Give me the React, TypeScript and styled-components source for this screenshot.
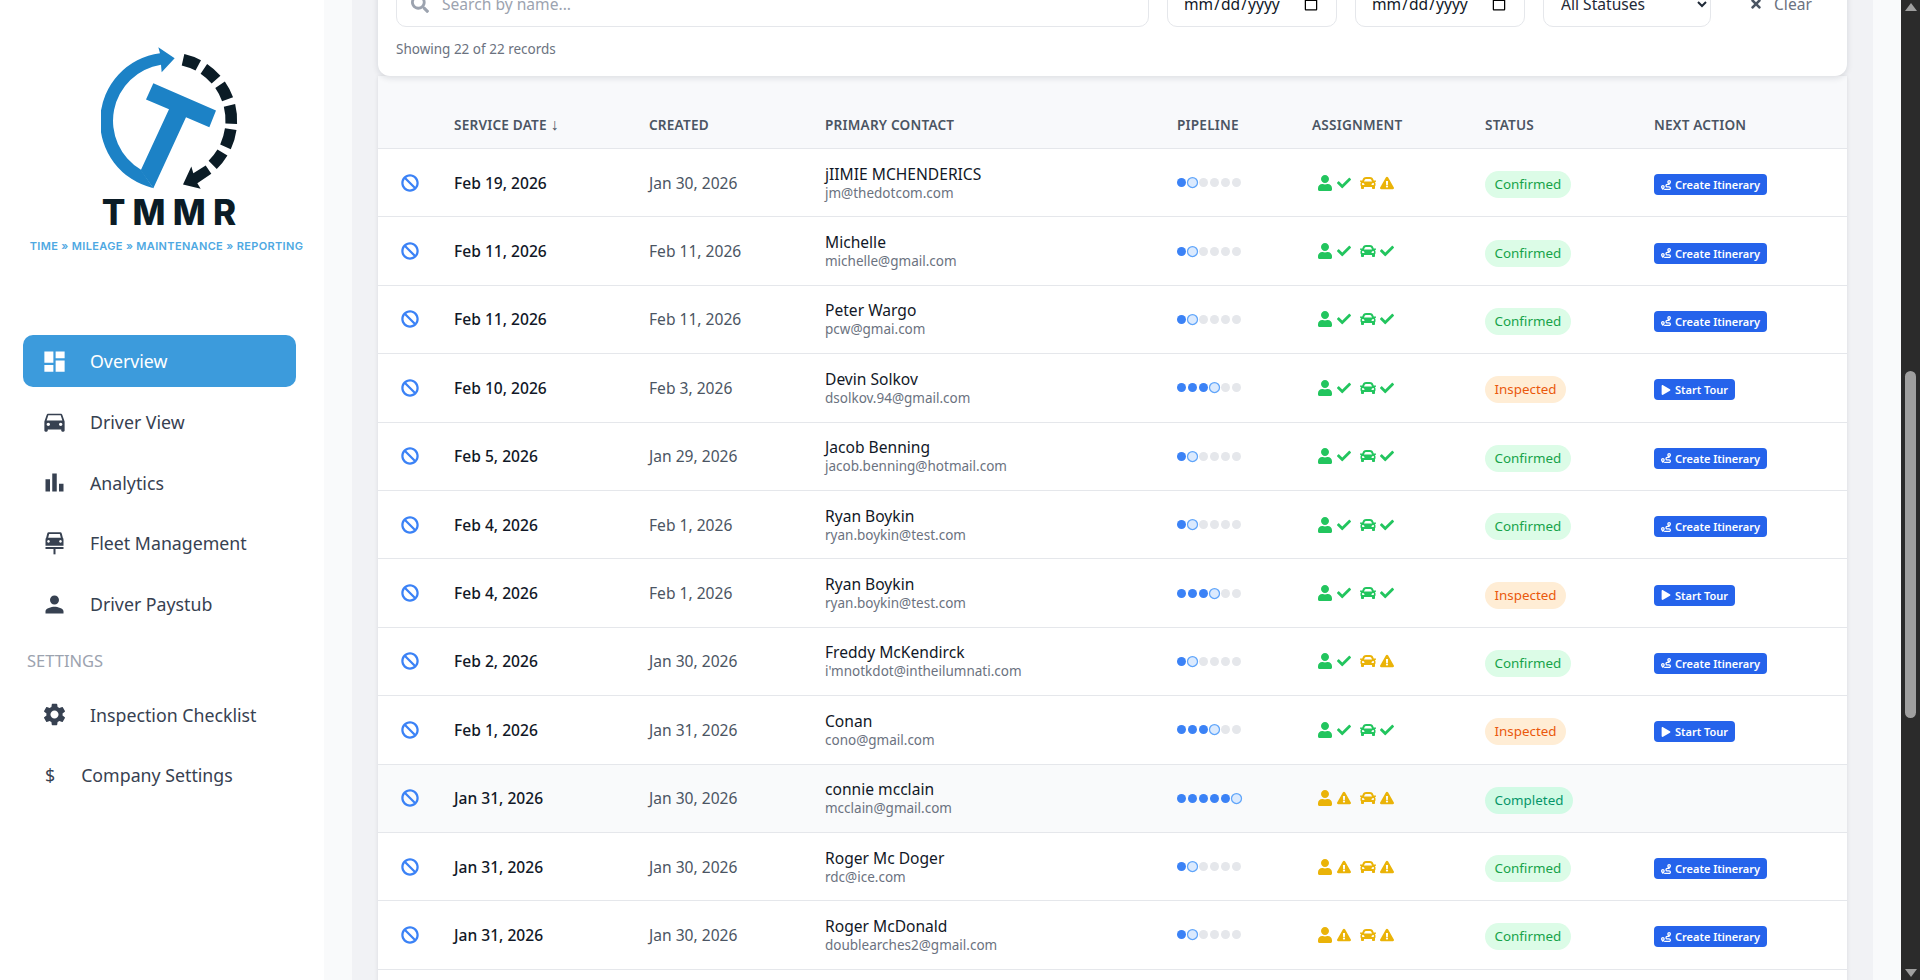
import React, { useLayoutEffect, useRef } from 'react';
import styled, { createGlobalStyle } from 'styled-components';
import { FaBan, FaCar, FaCheck, FaExclamationTriangle, FaPlay, FaRoute, FaSearch, FaTimes, FaUser } from 'react-icons/fa';
import { MdBarChart, MdDashboard, MdDirectionsCar, MdPerson, MdSettings } from 'react-icons/md';

type Status = 'Confirmed' | 'Inspected' | 'Completed';

interface Booking {
    serviceDate: string;
    created: string;
    name: string;
    email: string;
    status: Status;
    driverOk: boolean;
    carOk: boolean;
}

const bookings: Booking[] = [
    { serviceDate: 'Feb 19, 2026', created: 'Jan 30, 2026', name: 'jIIMIE MCHENDERICS', email: 'jm@thedotcom.com', status: 'Confirmed', driverOk: true, carOk: false },
    { serviceDate: 'Feb 11, 2026', created: 'Feb 11, 2026', name: 'Michelle', email: 'michelle@gmail.com', status: 'Confirmed', driverOk: true, carOk: true },
    { serviceDate: 'Feb 11, 2026', created: 'Feb 11, 2026', name: 'Peter Wargo', email: 'pcw@gmai.com', status: 'Confirmed', driverOk: true, carOk: true },
    { serviceDate: 'Feb 10, 2026', created: 'Feb 3, 2026', name: 'Devin Solkov', email: 'dsolkov.94@gmail.com', status: 'Inspected', driverOk: true, carOk: true },
    { serviceDate: 'Feb 5, 2026', created: 'Jan 29, 2026', name: 'Jacob Benning', email: 'jacob.benning@hotmail.com', status: 'Confirmed', driverOk: true, carOk: true },
    { serviceDate: 'Feb 4, 2026', created: 'Feb 1, 2026', name: 'Ryan Boykin', email: 'ryan.boykin@test.com', status: 'Confirmed', driverOk: true, carOk: true },
    { serviceDate: 'Feb 4, 2026', created: 'Feb 1, 2026', name: 'Ryan Boykin', email: 'ryan.boykin@test.com', status: 'Inspected', driverOk: true, carOk: true },
    { serviceDate: 'Feb 2, 2026', created: 'Jan 30, 2026', name: 'Freddy McKendirck', email: "i'mnotkdot@intheilumnati.com", status: 'Confirmed', driverOk: true, carOk: false },
    { serviceDate: 'Feb 1, 2026', created: 'Jan 31, 2026', name: 'Conan', email: 'cono@gmail.com', status: 'Inspected', driverOk: true, carOk: true },
    { serviceDate: 'Jan 31, 2026', created: 'Jan 30, 2026', name: 'connie mcclain', email: 'mcclain@gmail.com', status: 'Completed', driverOk: false, carOk: false },
    { serviceDate: 'Jan 31, 2026', created: 'Jan 30, 2026', name: 'Roger Mc Doger', email: 'rdc@ice.com', status: 'Confirmed', driverOk: false, carOk: false },
    { serviceDate: 'Jan 31, 2026', created: 'Jan 30, 2026', name: 'Roger McDonald', email: 'doublearches2@gmail.com', status: 'Confirmed', driverOk: false, carOk: false },
];

const pipelineStep: Record<Status, number> = { Confirmed: 1, Inspected: 3, Completed: 5 };

const statusColors: Record<Status, { bg: string; fg: string }> = {
    Confirmed: { bg: '#dcfce7', fg: '#16a34a' },
    Inspected: { bg: '#ffedd5', fg: '#ea580c' },
    Completed: { bg: '#d1fae5', fg: '#059669' },
};

const GlobalStyle = createGlobalStyle`
  html, body {
    margin: 0;
    height: 100%;
    overflow: hidden;
    font-family: "Noto Sans", "Open Sans", sans-serif;
    background: #f9fafb;
  }
  * { box-sizing: border-box; }
`;

const Shell = styled.div`
  display: flex;
  height: 100vh;
  overflow: hidden;
`;

const Sidebar = styled.aside`
  flex: 0 0 324px;
  background: #ffffff;
`;

const LogoArea = styled.div`
  height: 335px;
  width: 273px;
  margin-left: 30px;
  padding-top: 47px;
  display: flex;
  flex-direction: column;
  align-items: center;
`;

const LogoMark = styled.svg`
  width: 137px;
  height: 142px;
  margin-left: 5px;
  flex: none;
`;

const LogoWord = styled.div`
  font-family: "Inter", "Liberation Sans", sans-serif;
  font-weight: 800;
  font-size: 35px;
  line-height: 36px;
  letter-spacing: 7.2px;
  color: #0b1c26;
  margin: 5px 0 0 12px;
`;

const LogoTagline = styled.div`
  font-family: "Inter", "Liberation Sans", sans-serif;
  font-weight: 600;
  font-size: 11px;
  line-height: 14px;
  letter-spacing: 0.35px;
  color: #4ea8e2;
  white-space: nowrap;
  margin-top: 9px;
`;

const NavItem = styled.a<{ $active?: boolean }>`
  display: flex;
  align-items: center;
  gap: 22px;
  width: 273px;
  height: 52px;
  margin: 0 0 8.8px 23px;
  padding-left: 18px;
  border-radius: 10px;
  font-size: 17.76px;
  color: ${(p) => (p.$active ? '#ffffff' : '#374151')};
  background: ${(p) => (p.$active ? '#3c9bdc' : 'transparent')};
  svg {
    flex: none;
    font-size: 27px;
  }
`;

const DollarIcon = styled.span`
  margin: 0 4px;
`;

const NavLabel = styled.div`
  height: 43px;
  margin-bottom: 6.7px;
  padding-left: 27px;
  display: flex;
  align-items: center;
  font-size: 16.5px;
  color: #9ca3af;
`;

const Main = styled.main`
  flex: 1;
  min-width: 0;
  padding: 0 28px;
  background: #f9fafb;
`;

const ScrollArea = styled.div`
  height: 100%;
  overflow: hidden;
  background: #f1f2f5;
  padding: 40px 26px 60px;
`;

const FilterCard = styled.section`
  position: relative;
  z-index: 1;
  background: #ffffff;
  border-radius: 12px;
  padding: 18px;
  box-shadow: 0 2px 6px rgba(17, 24, 39, 0.12);
`;

const FilterRow = styled.div`
  display: flex;
  gap: 18px;
  height: 46px;
`;

const SearchBox = styled.label`
  width: 753px;
  display: flex;
  align-items: center;
  gap: 11px;
  padding-left: 14px;
  border: 1px solid #e5e7eb;
  border-radius: 10px;
  color: #9ca3af;
  svg {
    flex: none;
    font-size: 18px;
  }
`;

const SearchInput = styled.input`
  flex: 1;
  border: 0;
  outline: 0;
  background: transparent;
  font: inherit;
  font-size: 15.6px;
  &::placeholder {
    color: #9ca3af;
    opacity: 1;
  }
`;

const DateField = styled.input`
  width: 170px;
  padding: 0 15px;
  border: 1px solid #e5e7eb;
  border-radius: 10px;
  background: #ffffff;
  font: inherit;
  font-size: 15.6px;
  color: #111827;
`;

const StatusSelect = styled.select`
  width: 168px;
  padding: 0 13px;
  border: 1px solid #e5e7eb;
  border-radius: 10px;
  background: #ffffff;
  font: inherit;
  font-size: 15.6px;
  color: #1f2937;
`;

const ClearButton = styled.button`
  display: flex;
  align-items: center;
  gap: 11px;
  padding: 0 10px;
  margin-left: 10px;
  border: 0;
  background: transparent;
  font: inherit;
  font-size: 15.6px;
  color: #6b7280;
  svg {
    font-size: 14px;
    color: #4b5563;
  }
`;

const ResultCount = styled.div`
  margin-top: 13px;
  font-size: 13.5px;
  line-height: 18px;
  color: #6b7280;
`;

const TableCard = styled.section`
  background: #ffffff;
  box-shadow: 0 1px 4px rgba(17, 24, 39, 0.1);
  padding-bottom: 40px;
`;

const columns = '60px 195px 176px 352px 135px 173px 169px 209px';

const TableHead = styled.div`
  display: grid;
  grid-template-columns: ${columns};
  align-items: end;
  height: 73px;
  padding-bottom: 14px;
  background: #f8f9fb;
  border-bottom: 1px solid #e5e7eb;
`;

const HeadCell = styled.div`
  padding-left: 16px;
  font-size: 13.6px;
  line-height: 18px;
  font-weight: 600;
  letter-spacing: 0.2px;
  text-transform: uppercase;
  color: #4b5563;
`;

const SortArrow = styled.span`
  font-size: 16px;
  font-weight: 400;
`;

const Row = styled.div<{ $muted?: boolean }>`
  display: grid;
  grid-template-columns: ${columns};
  align-items: center;
  height: 68.4px;
  border-bottom: 1px solid #e5e7eb;
  background: ${(p) => (p.$muted ? '#f9fafb' : '#ffffff')};
`;

const Cell = styled.div`
  padding-left: 16px;
  min-width: 0;
`;

const CancelCell = styled.div`
  display: flex;
  justify-content: center;
  padding-left: 4px;
  color: #3b82f6;
  font-size: 18px;
`;

const ServiceDate = styled(Cell)`
  font-size: 15.6px;
  font-weight: 500;
  color: #111827;
`;

const CreatedDate = styled(Cell)`
  font-size: 15.6px;
  color: #4b5563;
`;

const ContactName = styled.div`
  font-size: 15.6px;
  line-height: 20px;
  color: #111827;
`;

const ContactEmail = styled.div`
  font-size: 13.5px;
  line-height: 18px;
  color: #6b7280;
`;

const Dots = styled(Cell)`
  display: flex;
  gap: 2px;
`;

const Dot = styled.span<{ $state: 'done' | 'current' | 'todo' }>`
  width: 9px;
  height: 9px;
  border-radius: 50%;
  background: ${(p) => (p.$state === 'done' ? '#3b82f6' : p.$state === 'current' ? '#dbeafe' : '#e5e7eb')};
  ${(p) => p.$state === 'current' && 'border: 1px solid #60a5fa; transform: scale(1.25);'}
`;

const Assignment = styled(Cell)`
  display: flex;
  align-items: center;
  padding-left: 21px;
`;

const AssignIcon = styled.span<{ $ok: boolean; $gap: number; $size: number }>`
  display: inline-flex;
  margin-right: ${(p) => p.$gap}px;
  color: ${(p) => (p.$ok ? '#22c55e' : '#eab308')};
  font-size: ${(p) => p.$size}px;
`;

const Badge = styled.span<{ $status: Status }>`
  display: inline-block;
  margin-top: 4px;
  padding: 0 9.5px;
  height: 27px;
  line-height: 27px;
  border-radius: 14px;
  font-size: 13.4px;
  background: ${(p) => statusColors[p.$status].bg};
  color: ${(p) => statusColors[p.$status].fg};
`;

const ActionButton = styled.button`
  display: inline-flex;
  align-items: center;
  gap: 4px;
  height: 21px;
  margin-top: 4px;
  padding: 0 7px;
  border: 0;
  border-radius: 4px;
  background: #2563eb;
  font: inherit;
  font-size: 11px;
  font-weight: 600;
  color: #ffffff;
  svg {
    font-size: 10px;
  }
`;

const ScrollTrack = styled.div`
  flex: 0 0 19px;
  display: flex;
  flex-direction: column;
  align-items: center;
  background: #2b2b2b;
  padding: 3px 0;
`;

const ArrowUp = styled.span`
  width: 0;
  height: 0;
  border-left: 6px solid transparent;
  border-right: 6px solid transparent;
  border-bottom: 8px solid #9f9f9f;
`;

const ArrowDown = styled(ArrowUp)`
  border-bottom: 0;
  border-top: 8px solid #9f9f9f;
  margin-top: auto;
`;

const ScrollThumb = styled.div`
  width: 11px;
  height: 347px;
  margin-top: 360px;
  border-radius: 6px;
  background: #9f9f9f;
`;

const dashAngles = [
    [-77, -62],
    [-56, -41],
    [-35, -20],
    [-14, 3],
    [8, 25],
    [31, 45.5],
];

const dashPath = ([from, to]: number[]) => {
    const point = (deg: number) => {
        const rad = (deg * Math.PI) / 180;
        return `${445 + 187 * Math.cos(rad)} ${270 + 187 * Math.sin(rad)}`;
    };
    return `M${point(from)} A187 187 0 0 1 ${point(to)}`;
};

const Logo = () => (
    <LogoArea>
        <LogoMark viewBox="241 50 411 425">
            <path
                fill="#1c82c6"
                d="M398 473 A206 206 0 0 1 418 68 L413 50 L462 83 L423 125 L421 103 A170 170 0 0 0 360 417 Z"
            />
            <polygon fill="#1c82c6" points="398,158 586,240 566,290 496,260 398,473 360,420 445,236 376,207" />
            {dashAngles.map((a) => (
                <path key={a[0]} d={dashPath(a)} fill="none" stroke="#0b1c26" strokeWidth={35} />
            ))}
            <polygon fill="#0b1c26" points="555,405 572,430 530,458 540,475 487,462 512,408 518,428" />
        </LogoMark>
        <LogoWord>TMMR</LogoWord>
        <LogoTagline>TIME » MILEAGE » MAINTENANCE » REPORTING</LogoTagline>
    </LogoArea>
);

// car on a signpost, the stock icon sets have no close match
const FleetIcon = () => (
    <svg viewBox="-13.5 -7 81 81" width="1em" height="1em" fill="currentColor">
        <path
            fillRule="evenodd"
            d="M10 0H44Q48 0 49 4L52 16Q54 18 54 22V40H0V22Q0 18 2 16L5 4Q6 0 10 0ZM11 5L8 16H46L43 5ZM9 23a4 4 0 1 0 .01 0ZM45 23a4 4 0 1 0 .01 0Z"
        />
        <rect x="0" y="44" width="54" height="6" />
        <rect x="24" y="50" width="6" height="16" />
    </svg>
);

const BookingRow: React.FC<{ booking: Booking }> = ({ booking }) => {
    const step = pipelineStep[booking.status];
    return (
        <Row $muted={booking.status === 'Completed'}>
            <CancelCell>
                <FaBan />
            </CancelCell>
            <ServiceDate>{booking.serviceDate}</ServiceDate>
            <CreatedDate>{booking.created}</CreatedDate>
            <Cell>
                <ContactName>{booking.name}</ContactName>
                <ContactEmail>{booking.email}</ContactEmail>
            </Cell>
            <Dots>
                {[0, 1, 2, 3, 4, 5].map((i) => (
                    <Dot key={i} $state={i < step ? 'done' : i === step ? 'current' : 'todo'} />
                ))}
            </Dots>
            <Assignment>
                <AssignIcon $ok={booking.driverOk} $gap={4} $size={16}>
                    <FaUser />
                </AssignIcon>
                <AssignIcon $ok={booking.driverOk} $gap={9} $size={14}>
                    {booking.driverOk ? <FaCheck /> : <FaExclamationTriangle />}
                </AssignIcon>
                <AssignIcon $ok={booking.carOk} $gap={4} $size={16}>
                    <FaCar />
                </AssignIcon>
                <AssignIcon $ok={booking.carOk} $gap={0} $size={14}>
                    {booking.carOk ? <FaCheck /> : <FaExclamationTriangle />}
                </AssignIcon>
            </Assignment>
            <Cell>
                <Badge $status={booking.status}>{booking.status}</Badge>
            </Cell>
            <Cell>
                {booking.status === 'Confirmed' && (
                    <ActionButton>
                        <FaRoute /> Create Itinerary
                    </ActionButton>
                )}
                {booking.status === 'Inspected' && (
                    <ActionButton>
                        <FaPlay /> Start Tour
                    </ActionButton>
                )}
            </Cell>
        </Row>
    );
};

const App: React.FC = () => {
    const scrollRef = useRef<HTMLDivElement>(null);

    // the page is photographed part way down the list
    useLayoutEffect(() => {
        if (scrollRef.current) scrollRef.current.scrollTop = 77;
    }, []);

    return (
        <Shell>
            <GlobalStyle />
            <Sidebar>
                <Logo />
                <nav>
                    <NavItem $active>
                        <MdDashboard /> Overview
                    </NavItem>
                    <NavItem>
                        <MdDirectionsCar /> Driver View
                    </NavItem>
                    <NavItem>
                        <MdBarChart /> Analytics
                    </NavItem>
                    <NavItem>
                        <FleetIcon /> Fleet Management
                    </NavItem>
                    <NavItem>
                        <MdPerson /> Driver Paystub
                    </NavItem>
                    <NavLabel>SETTINGS</NavLabel>
                    <NavItem>
                        <MdSettings /> Inspection Checklist
                    </NavItem>
                    <NavItem>
                        <DollarIcon>$</DollarIcon> Company Settings
                    </NavItem>
                </nav>
            </Sidebar>
            <Main>
                <ScrollArea ref={scrollRef}>
                    <FilterCard>
                        <FilterRow>
                            <SearchBox>
                                <FaSearch />
                                <SearchInput placeholder="Search by name..." readOnly />
                            </SearchBox>
                            <DateField type="date" />
                            <DateField type="date" />
                            <StatusSelect defaultValue="all">
                                <option value="all">All Statuses</option>
                                <option value="confirmed">Confirmed</option>
                                <option value="inspected">Inspected</option>
                                <option value="completed">Completed</option>
                            </StatusSelect>
                            <ClearButton>
                                <FaTimes /> Clear
                            </ClearButton>
                        </FilterRow>
                        <ResultCount>Showing 22 of 22 records</ResultCount>
                    </FilterCard>
                    <TableCard>
                        <TableHead>
                            <HeadCell />
                            <HeadCell>
                                Service Date <SortArrow>↓</SortArrow>
                            </HeadCell>
                            <HeadCell>Created</HeadCell>
                            <HeadCell>Primary Contact</HeadCell>
                            <HeadCell>Pipeline</HeadCell>
                            <HeadCell>Assignment</HeadCell>
                            <HeadCell>Status</HeadCell>
                            <HeadCell>Next Action</HeadCell>
                        </TableHead>
                        {bookings.map((b) => (
                            <BookingRow key={b.email + b.status} booking={b} />
                        ))}
                    </TableCard>
                </ScrollArea>
            </Main>
            <ScrollTrack>
                <ArrowUp />
                <ScrollThumb />
                <ArrowDown />
            </ScrollTrack>
        </Shell>
    );
};

export default App;
